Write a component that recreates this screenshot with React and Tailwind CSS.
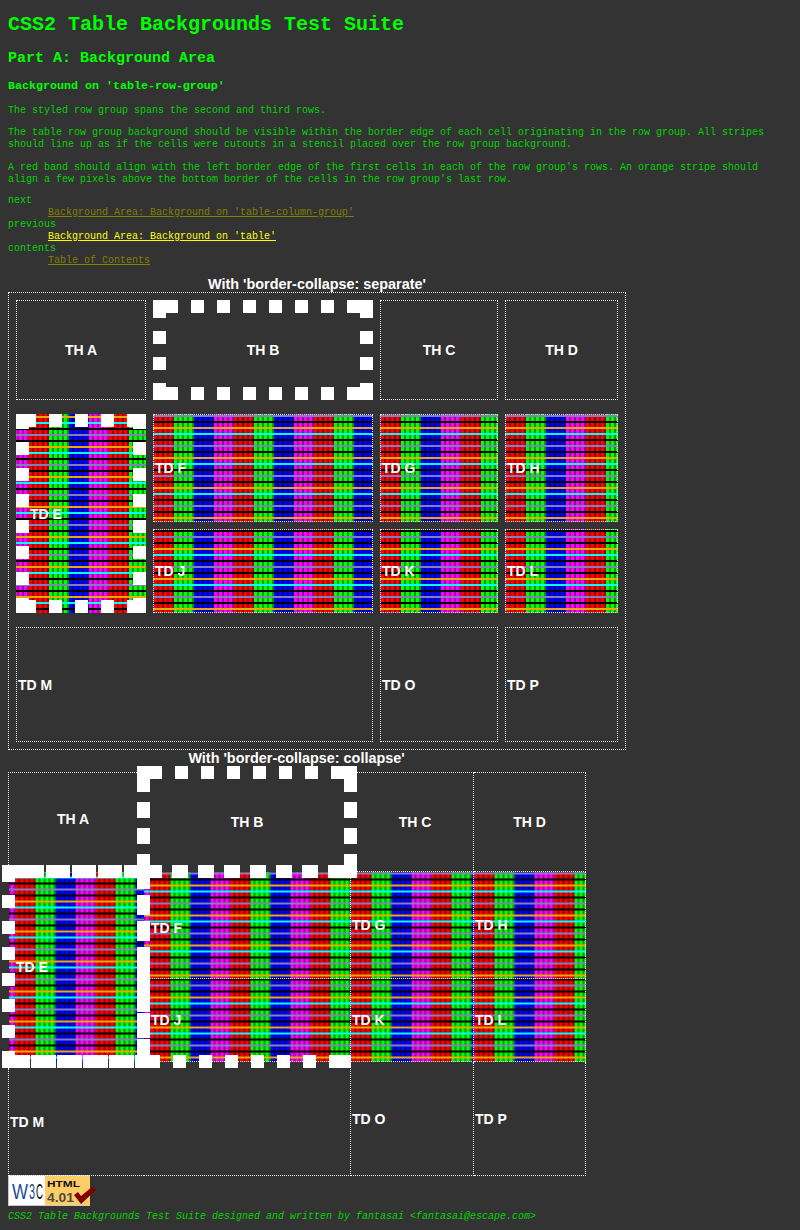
const stripes =
  "bg-[image:linear-gradient(180deg,#8080c0_0_2px,transparent_2px_6px,#000_6px_8px,transparent_8px_12px,#e6aa00_12px_14px,transparent_14px_18px,#00ffff_18px_20px,transparent_20px_24px,#000_24px_26px,transparent_26px_30px),linear-gradient(90deg,transparent_0_3px,rgba(0,0,0,0.4)_3px_5px),linear-gradient(90deg,#ff0000_0_20px,#00ff00_20px_40px,#0000ff_40px_60px,#ff00ff_60px_80px)] bg-[length:80px_30px,5px_30px,80px_30px]";

const thin = "border border-dotted border-white";
const thick = "border-[13px] border-dashed border-transparent";
const th = "p-px text-center align-middle font-bold";
const td = "p-px text-left align-middle font-bold";

// runs of white squares along an edge, in page pixels
const hs = (y, runs) => runs.map(([a, b]) => [a, y, b - a, 13]);
const vs = (x, runs) => runs.map(([a, b]) => [x, a, 13, b - a]);

const thbTop = [[153, 178], [191, 204], [217, 230], [243, 256], [269, 282], [295, 308], [321, 334], [347, 373]];
const thbSide = [[300, 318], [331, 344], [357, 370], [383, 400]];
const tdeTop = [[16, 36], [49, 62], [75, 88], [101, 114], [127, 146]];
const tdeSide = [[414, 429], [442, 455], [468, 481], [494, 507], [520, 533], [546, 559], [572, 585], [598, 613]];

const separateDots = [
  ...hs(300, thbTop),
  ...hs(387, thbTop),
  ...vs(153, thbSide),
  ...vs(360, thbSide),
  ...hs(414, tdeTop),
  ...hs(600, tdeTop),
  ...vs(16, tdeSide),
  ...vs(133, tdeSide),
];

const collapseDots = [
  ...hs(766, [[137, 162], [175, 188], [201, 214], [227, 240], [253, 266], [279, 292], [305, 318], [331, 357]]),
  ...vs(137, [[766, 792], [802, 818], [828, 844], [854, 865]]),
  ...vs(344, [[766, 792], [802, 818], [828, 844], [854, 878]]),
  ...hs(865, [[2, 44], [46, 70], [72, 96], [98, 122], [124, 162], [172, 188], [198, 214], [224, 240], [250, 266], [276, 292], [302, 318], [328, 357]]),
  ...vs(2, [[865, 882], [895, 908], [921, 934], [947, 960], [973, 986], [999, 1012], [1025, 1038], [1051, 1068]]),
  ...vs(137, [[865, 889], [895, 915], [921, 941], [947, 1012], [1013, 1038], [1039, 1068]]),
  ...hs(1055, [[2, 30], [31, 56], [57, 82], [83, 108], [109, 134], [135, 160], [173, 186], [199, 212], [225, 238], [251, 264], [277, 290], [303, 316], [329, 351]]),
];

// the thick cell borders are square dots, which a CSS border doesn't give
function Dots({ rects, x, y }) {
  return (
    <svg width="620" height="480" className="absolute left-0 top-0 overflow-visible">
      <g transform={`translate(${-x} ${-y})`} fill="#ffffff">
        {rects.map(([rx, ry, w, h], i) => (
          <rect key={i} x={rx} y={ry} width={w} height={h} />
        ))}
      </g>
    </svg>
  );
}

function Spacer() {
  return (
    <tr>
      <td colSpan={4} className="h-0 p-0"></td>
    </tr>
  );
}

function SeparateTable() {
  return (
    <div className="relative">
      <table className={`w-[618px] table-fixed border-separate border-spacing-[7px] ${thin}`}>
        <caption className="caption-top h-4 text-center text-[14.4px] font-bold leading-4">With 'border-collapse: separate'</caption>
        <thead>
          <tr>
            <th className={`w-[130px] h-[100px] ${th} ${thin}`}>TH A</th>
            <th className={`w-[220px] ${th} ${thick}`}>TH B</th>
            <th className={`w-[118px] ${th} ${thin}`}>TH C</th>
            <th className={`w-[113px] ${th} ${thin}`}>TH D</th>
          </tr>
          <Spacer />
        </thead>
        <tbody>
          <tr>
            <td rowSpan={2} className={`${td} ${thick} ${stripes} bg-[position:0_7px]`}>TD E</td>
            <td className={`h-[108px] ${td} ${thin} ${stripes} bg-[position:0_0]`}>TD F</td>
            <td className={`${td} ${thin} ${stripes} bg-[position:0_0]`}>TD G</td>
            <td className={`${td} ${thin} ${stripes} bg-[position:0_0]`}>TD H</td>
          </tr>
          <tr>
            <td className={`h-[84px] ${td} ${thin} ${stripes} bg-[position:0_6px]`}>TD J</td>
            <td className={`${td} ${thin} ${stripes} bg-[position:0_6px]`}>TD K</td>
            <td className={`${td} ${thin} ${stripes} bg-[position:0_6px]`}>TD L</td>
          </tr>
          <Spacer />
        </tbody>
        <tfoot>
          <tr>
            <td colSpan={2} className={`h-[115px] ${td} ${thin}`}>TD M</td>
            <td className={`${td} ${thin}`}>TD O</td>
            <td className={`${td} ${thin}`}>TD P</td>
          </tr>
        </tfoot>
      </table>
      <Dots rects={separateDots} x={8} y={276} />
    </div>
  );
}

function CollapseTable() {
  return (
    <div className="relative">
      <table className={`-ml-1.5 w-[577px] table-fixed border-collapse ${thin}`}>
        <caption className="caption-top ml-[5px] h-4 text-center text-[14.4px] font-bold leading-4">With 'border-collapse: collapse'</caption>
        <thead>
          <tr>
            <th className={`w-[135px] h-[99px] ${th} ${thin}`}>TH A</th>
            <th className={`w-[207px] ${th} ${thick}`}>TH B</th>
            <th className={`w-[123px] ${th} ${thin}`}>TH C</th>
            <th className={`w-[112px] ${th} ${thin}`}>TH D</th>
          </tr>
        </thead>
        <tbody>
          <tr>
            <td rowSpan={2} className={`${td} ${thick} ${stripes} bg-[position:0_10px]`}>TD E</td>
            <td className={`h-[107px] ${td} ${thin} ${stripes} bg-[position:0_24px]`}>TD F</td>
            <td className={`${td} ${thin} ${stripes} bg-[position:0_30px]`}>TD G</td>
            <td className={`${td} ${thin} ${stripes} bg-[position:0_30px]`}>TD H</td>
          </tr>
          <tr>
            <td className={`h-[83px] ${td} ${thin} ${stripes} bg-[position:0_5px]`}>TD J</td>
            <td className={`${td} ${thin} ${stripes} bg-[position:0_5px]`}>TD K</td>
            <td className={`${td} ${thin} ${stripes} bg-[position:0_5px]`}>TD L</td>
          </tr>
        </tbody>
        <tfoot>
          <tr>
            <td colSpan={2} className={`h-[114px] ${td} ${thin}`}>TD M</td>
            <td className={`${td} ${thin}`}>TD O</td>
            <td className={`${td} ${thin}`}>TD P</td>
          </tr>
        </tfoot>
      </table>
      <Dots rects={collapseDots} x={8} y={750} />
    </div>
  );
}

// W3C "HTML 4.01" badge
function Badge() {
  return (
    <svg width="88" height="31" viewBox="0 0 88 31" className="-mt-px block">
      <rect x="0" y="0" width="82" height="31" fill="#c9c9c9" />
      <rect x="1" y="1" width="36" height="29" fill="#ffffff" />
      <rect x="37" y="1" width="45" height="29" fill="#ffcc66" />
      <text x="4" y="24" fontFamily="Liberation Sans" fontSize="22" fill="#1a4f8f" textLength="16" lengthAdjust="spacingAndGlyphs">W</text>
      <text x="21" y="24" fontFamily="Liberation Sans" fontSize="22" fill="#1a4f8f" textLength="6" lengthAdjust="spacingAndGlyphs">3</text>
      <text x="28" y="24" fontFamily="Liberation Sans" fontSize="22" fill="#111111" textLength="7" lengthAdjust="spacingAndGlyphs">C</text>
      <text x="39" y="12" fontFamily="Liberation Sans" fontWeight="bold" fontSize="9" fill="#111111" textLength="33" lengthAdjust="spacingAndGlyphs">HTML</text>
      <text x="39" y="27" fontFamily="Liberation Sans" fontWeight="bold" fontSize="13" fill="#4a4a4a" textLength="27" lengthAdjust="spacingAndGlyphs">4.01</text>
      <path d="M66 20 L70 17 L73 21 L84 12 L88 15 L73 29 Z" fill="#800000" />
    </svg>
  );
}

export default function App() {
  return (
    <div className="min-h-[1230px] bg-[#333333] px-2 pt-[13px] font-['Liberation_Mono',monospace] text-[10px] leading-3 text-[#00d400]">
      <h1 className="text-[20px] leading-6 font-bold text-[#00ff00]">CSS2 Table Backgrounds Test Suite</h1>
      <h2 className="mt-[13px] text-[15px] leading-[18px] font-bold text-[#00ff00]">Part A: Background Area</h2>
      <h3 className="mt-[11px] text-[11.67px] leading-[14px] font-bold text-[#00ff00]">Background on 'table-row-group'</h3>
      <p className="mt-3">The styled row group spans the second and third rows.</p>
      <p className="mt-2.5">
        The table row group background should be visible within the border edge of each cell originating in the row group. All stripes
        should line up as if the cells were cutouts in a stencil placed over the row group background.
      </p>
      <p className="mt-[11px]">
        A red band should align with the left border edge of the first cells in each of the row group's rows. An orange stripe should
        align a few pixels above the bottom border of the cells in the row group's last row.
      </p>
      <dl className="mt-[9px]">
        <dt>next</dt>
        <dd className="ml-10"><a href="#" className="text-[#808000] underline">Background Area: Background on 'table-column-group'</a></dd>
        <dt>previous</dt>
        <dd className="ml-10"><a href="#" className="text-[#ffff00] underline">Background Area: Background on 'table'</a></dd>
        <dt>contents</dt>
        <dd className="ml-10"><a href="#" className="text-[#808000] underline">Table of Contents</a></dd>
      </dl>
      <div className="mt-[9px] font-['Liberation_Sans',sans-serif] text-sm text-white">
        <SeparateTable />
        <CollapseTable />
      </div>
      <Badge />
      <address className="mt-[5px] text-[10px] italic">
        CSS2 Table Backgrounds Test Suite designed and written by fantasai &lt;fantasai@escape.com&gt;
      </address>
    </div>
  );
}
